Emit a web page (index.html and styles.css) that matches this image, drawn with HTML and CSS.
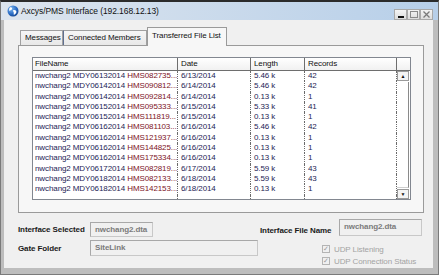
FILE: index.html
```html
<!DOCTYPE html>
<html>
<head>
    <title>Axcys/PMS Interface</title>
    <link rel="stylesheet" href="styles.css">
</head>
<body>
    <div class="window">
        <div class="titlebar">
            <svg class="app-icon" width="12" height="12" viewBox="0 0 12 12">
                <defs>
                    <radialGradient id="globe" cx="0.35" cy="0.3" r="0.8">
                        <stop offset="0" stop-color="#7fb8f0"/>
                        <stop offset="0.6" stop-color="#2a6cc4"/>
                        <stop offset="1" stop-color="#123f86"/>
                    </radialGradient>
                </defs>
                <circle cx="6" cy="6" r="5.5" fill="url(#globe)"/>
                <path d="M3 2.5 C4.5 2 5.5 3 5 4.2 C4.4 5.2 3 5 2.6 6.2 C2 5 1.9 3.6 3 2.5 Z" fill="#fff"/>
                <path d="M6.5 5 C8 4.6 9.6 5.4 9.4 7 C9.2 8.4 8 9.6 6.8 9.8 C6.4 8.6 7.2 7.8 6.4 6.8 C6 6.2 6 5.4 6.5 5 Z" fill="#fff"/>
            </svg>
            <span class="title">Axcys/PMS Interface (192.168.12.13)</span>
            <div class="caption-buttons">
                <span class="cap-btn"><span class="min-glyph"></span></span>
                <span class="cap-btn"><span class="max-glyph"></span></span>
                <span class="cap-btn">
                    <svg width="7" height="7" viewBox="0 0 7 7"><path d="M0.5 0.5 L6.5 6.5 M6.5 0.5 L0.5 6.5" stroke="#7a7a7a" stroke-width="1.3"/></svg>
                </span>
            </div>
        </div>

        <div class="client">
            <div class="tabs">
                <div class="tab tab-messages">Messages</div>
                <div class="tab tab-members">Connected Members</div>
                <div class="tab tab-files active">Transferred File List</div>
            </div>

            <div class="tabpanel">
                <div class="listview">
                    <div class="lv-header">
                        <div class="col col-name">FileName</div>
                        <div class="col col-date">Date</div>
                        <div class="col col-len">Length</div>
                        <div class="col col-rec">Records</div>
                        <div class="col col-corner"></div>
                    </div>
                    <div class="lv-body">
                        <div class="lv-rows">
                            <div class="row"><div class="col col-name">nwchang2 MDY06132014 <span class="hms">HMS082735...</span></div><div class="col col-date">6/13/2014</div><div class="col col-len">5.46 k</div><div class="col col-rec">42</div></div>
                            <div class="row"><div class="col col-name">nwchang2 MDY06142014 <span class="hms">HMS090812...</span></div><div class="col col-date">6/14/2014</div><div class="col col-len">5.46 k</div><div class="col col-rec">42</div></div>
                            <div class="row"><div class="col col-name">nwchang2 MDY06142014 <span class="hms">HMS092814...</span></div><div class="col col-date">6/14/2014</div><div class="col col-len">0.13 k</div><div class="col col-rec">1</div></div>
                            <div class="row"><div class="col col-name">nwchang2 MDY06152014 <span class="hms">HMS095333...</span></div><div class="col col-date">6/15/2014</div><div class="col col-len">5.33 k</div><div class="col col-rec">41</div></div>
                            <div class="row"><div class="col col-name">nwchang2 MDY06152014 <span class="hms">HMS111819...</span></div><div class="col col-date">6/15/2014</div><div class="col col-len">0.13 k</div><div class="col col-rec">1</div></div>
                            <div class="row"><div class="col col-name">nwchang2 MDY06162014 <span class="hms">HMS081103...</span></div><div class="col col-date">6/16/2014</div><div class="col col-len">5.46 k</div><div class="col col-rec">42</div></div>
                            <div class="row"><div class="col col-name">nwchang2 MDY06162014 <span class="hms">HMS121937...</span></div><div class="col col-date">6/16/2014</div><div class="col col-len">0.13 k</div><div class="col col-rec">1</div></div>
                            <div class="row"><div class="col col-name">nwchang2 MDY06162014 <span class="hms">HMS144825...</span></div><div class="col col-date">6/16/2014</div><div class="col col-len">0.13 k</div><div class="col col-rec">1</div></div>
                            <div class="row"><div class="col col-name">nwchang2 MDY06162014 <span class="hms">HMS175334...</span></div><div class="col col-date">6/16/2014</div><div class="col col-len">0.13 k</div><div class="col col-rec">1</div></div>
                            <div class="row"><div class="col col-name">nwchang2 MDY06172014 <span class="hms">HMS082819...</span></div><div class="col col-date">6/17/2014</div><div class="col col-len">5.59 k</div><div class="col col-rec">43</div></div>
                            <div class="row"><div class="col col-name">nwchang2 MDY06182014 <span class="hms">HMS082133...</span></div><div class="col col-date">6/18/2014</div><div class="col col-len">5.59 k</div><div class="col col-rec">43</div></div>
                            <div class="row"><div class="col col-name">nwchang2 MDY06182014 <span class="hms">HMS142153...</span></div><div class="col col-date">6/18/2014</div><div class="col col-len">0.13 k</div><div class="col col-rec">1</div></div>
                            <div class="row filler"><div class="col col-name"></div><div class="col col-date"></div><div class="col col-len"></div><div class="col col-rec"></div></div>
                        </div>
                        <div class="vscroll">
                            <div class="sb-btn">&#9650;</div>
                            <div class="sb-track"><div class="sb-thumb"></div></div>
                            <div class="sb-btn">&#9660;</div>
                        </div>
                    </div>
                </div>
            </div>

            <div class="fields">
                <div class="field-grid">
                    <label>Interface Selected</label>
                    <div class="textbox tb-short">nwchang2.dta</div>
                    <label>Gate Folder</label>
                    <div class="textbox tb-long">SiteLink</div>
                </div>
                <div class="field-right">
                    <div class="field-line">
                        <label>Interface File Name</label>
                        <div class="textbox tb-file">nwchang2.dta</div>
                    </div>
                    <div class="checks">
                        <div class="check"><span class="box">&#10003;</span>UDP Listening</div>
                        <div class="check"><span class="box">&#10003;</span>UDP Connection Status</div>
                    </div>
                </div>
            </div>
        </div>
    </div>
</body>
</html>
```

FILE: styles.css
```css
* {
    box-sizing: border-box;
}
body {
    margin: 0;
    font-family: "Liberation Sans", Arial, sans-serif;
    font-size: 8px;
    letter-spacing: -0.1px;
    background: #2b2b2b;
}
.window {
    width: 439px;
    height: 275px;
    display: flex;
    flex-direction: column;
    background: #bdbdbd;
    border-top: 2px solid #2b2b2b;
    border-left: 1px solid #7a7a7a;
    border-right: 1px solid #7a7a7a;
    border-bottom: 1px solid #7a7a7a;
    overflow: hidden;
}

/* title bar */
.titlebar {
    height: 18px;
    display: flex;
    align-items: center;
    padding: 0 5px 0 6px;
    background: linear-gradient(to right, #dde5ee, #b7cfe9);
}
.app-icon {
    margin-right: 2px;
}
.title {
    color: #111;
    font-size: 8.5px;
    flex: 1;
}
.caption-buttons {
    display: flex;
    align-self: flex-end;
}
.cap-btn {
    width: 13px;
    height: 11px;
    border: 1px solid #a9a9a9;
    background: linear-gradient(#f4f4f4, #dcdcdc);
    display: flex;
    align-items: center;
    justify-content: center;
}
.min-glyph {
    width: 6px;
    height: 2px;
    background: #111;
    margin-top: 4px;
}
.max-glyph {
    width: 8px;
    height: 7px;
    border: 1px solid #8a8a8a;
}

/* client area */
.client {
    flex: 1;
    margin: 0 5px 6px 3px;
    background: #f0f0f0;
    display: flex;
    flex-direction: column;
    padding: 7px 9px 0 14px;
}
.tabs {
    display: flex;
    align-items: flex-end;
    height: 19px;
    margin-bottom: -1px;
    padding-left: 2px;
    position: relative;
    z-index: 1;
}
.tab {
    height: 15px;
    margin-bottom: 1px;
    padding-left: 4px;
    line-height: 14px;
    color: #111;
    border: 1px solid #a0a0a0;
    border-bottom: none;
    background: linear-gradient(#f6f6f6, #e8e8e8);
    white-space: nowrap;
}
.tab-messages {
    width: 43px;
}
.tab-members {
    width: 84px;
    border-left-color: #5f6f90;
}
.tab-files {
    width: 80px;
}
.tab.active {
    height: 19px;
    margin-bottom: 0;
    line-height: 15px;
    background: #f7f7f7;
    border-color: #9a9a9a;
}
.tabpanel {
    width: 406px;
    height: 168px;
    border: 1px solid #9a9a9a;
    background: #f7f7f7;
    padding: 11px 12px 12px 13px;
}

/* list view */
.listview {
    height: 143px;
    border: 1px solid #828790;
    background: #fff;
    display: flex;
    flex-direction: column;
}
.lv-header {
    display: flex;
    height: 13px;
    color: #111;
}
.lv-header .col {
    border-right: 1px solid #6e6e6e;
    border-bottom: 1px solid #6e6e6e;
    background: linear-gradient(#ffffff, #f1f1f1);
    line-height: 12px;
}
.col {
    padding-left: 3px;
    white-space: nowrap;
    overflow: hidden;
}
.col-name {
    width: 145px;
    padding-left: 2px;
}
.col-date {
    width: 73px;
}
.col-len {
    width: 54px;
}
.col-rec {
    width: 92px;
}
.lv-header .col-corner {
    flex: 1;
    border-right: none;
}
.lv-body {
    flex: 1;
    display: flex;
}
.lv-rows {
    width: 364px;
    display: flex;
    flex-direction: column;
}
.row {
    display: flex;
    height: 10.3px;
    line-height: 10.3px;
    color: #1d1d55;
}
.row .col {
    border-right: 1px dotted #6a6a6a;
}
.row.filler {
    flex: 1;
}
.hms {
    color: #7d1426;
}
.vscroll {
    flex: 1;
    display: flex;
    flex-direction: column;
    background: #fff;
    padding-right: 1px;
}
.sb-btn {
    height: 10px;
    border: 1px solid #9a9a9a;
    background: #f4f4f4;
    font-size: 5px;
    line-height: 8px;
    text-align: center;
    color: #111;
}
.sb-track {
    flex: 1;
    padding: 1px 0;
}
.sb-thumb {
    height: 100%;
    border-right: 1px solid #8a8a8a;
    border-bottom: 1px solid #cfcfcf;
}

/* bottom fields */
.fields {
    display: flex;
    padding-top: 6px;
    color: #1a1a1a;
}
.field-grid {
    display: grid;
    grid-template-columns: 72px auto;
    grid-template-rows: 15px 16px;
    row-gap: 3px;
    align-items: center;
    margin-top: 3px;
}
label {
    font-weight: bold;
    white-space: nowrap;
}
.textbox {
    height: 100%;
    border: 1px solid #c8c8c8;
    border-top-color: #a8a8a8;
    border-left-color: #a8a8a8;
    background: #f0f0f0;
    color: #7b7b7b;
    font-weight: bold;
    padding-left: 4px;
    line-height: 13px;
}
.tb-short {
    width: 63px;
}
.tb-long {
    width: 168px;
}
.field-right {
    margin-left: 2px;
    display: flex;
    flex-direction: column;
}
.field-line {
    display: flex;
    align-items: flex-end;
    height: 17px;
}
.field-line label {
    width: 79px;
    margin-bottom: 1px;
}
.tb-file {
    width: 83px;
}
.checks {
    margin: 7px 0 0 62px;
    color: #a3a3a3;
    white-space: nowrap;
}
.check {
    display: flex;
    align-items: center;
    height: 12px;
}
.box {
    width: 8px;
    height: 8px;
    border: 1px solid #b4b4b4;
    font-size: 7px;
    line-height: 6px;
    text-align: center;
    margin-right: 4px;
    color: #9a9a9a;
}
```
